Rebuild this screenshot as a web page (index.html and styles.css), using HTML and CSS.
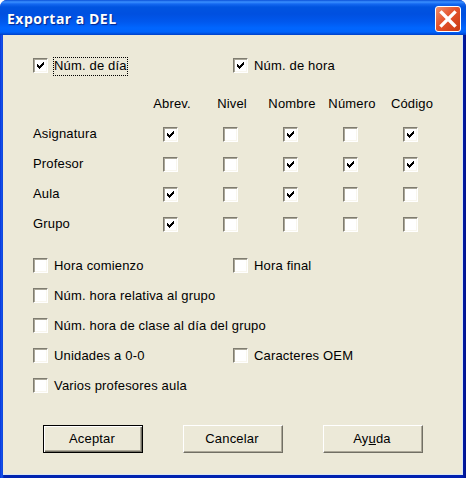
FILE: index.html
```
<!DOCTYPE html>
<html lang="es">
<head>
<meta charset="utf-8">
<title>Exportar a DEL</title>
<link rel="stylesheet" href="styles.css">
</head>
<body>
<svg class="defs" aria-hidden="true"><symbol id="tick" viewBox="0 0 7 7"><path d="M0 2h1v1h1v1h1V3h1V2h1V1h1V0h1v3H6v1H5v1H4v1H3v1H2V6H1V5H0z"/></symbol></svg>
<main class="window">
  <header class="titlebar">
    <h1 class="title">Exportar a DEL</h1>
    <button class="close" aria-label="Cerrar"><svg viewBox="0 0 26 26"><path d="M6 6L20 20M20 6L6 20"/></svg></button>
  </header>
  <div class="content">
    <div class="row">
      <label class="option"><span class="box"><svg><use href="#tick"/></svg></span><span class="text focus">Núm. de día</span></label>
      <label class="option"><span class="box"><svg><use href="#tick"/></svg></span><span class="text">Núm. de hora</span></label>
    </div>
    <div class="grid">
      <span></span><span class="head">Abrev.</span><span class="head">Nivel</span><span class="head">Nombre</span><span class="head">Número</span><span class="head">Código</span>
      <span class="name">Asignatura</span><span class="box"><svg><use href="#tick"/></svg></span><span class="box"></span><span class="box"><svg><use href="#tick"/></svg></span><span class="box"></span><span class="box"><svg><use href="#tick"/></svg></span>
      <span class="name">Profesor</span><span class="box"></span><span class="box"></span><span class="box"><svg><use href="#tick"/></svg></span><span class="box"><svg><use href="#tick"/></svg></span><span class="box"><svg><use href="#tick"/></svg></span>
      <span class="name">Aula</span><span class="box"><svg><use href="#tick"/></svg></span><span class="box"></span><span class="box"><svg><use href="#tick"/></svg></span><span class="box"></span><span class="box"></span>
      <span class="name">Grupo</span><span class="box"><svg><use href="#tick"/></svg></span><span class="box"></span><span class="box"></span><span class="box"></span><span class="box"></span>
    </div>
    <div class="row">
      <label class="option"><span class="box"></span><span class="text">Hora comienzo</span></label>
      <label class="option"><span class="box"></span><span class="text">Hora final</span></label>
    </div>
    <div class="row"><label class="option"><span class="box"></span><span class="text">Núm. hora relativa al grupo</span></label></div>
    <div class="row"><label class="option"><span class="box"></span><span class="text">Núm. hora de clase al día del grupo</span></label></div>
    <div class="row">
      <label class="option"><span class="box"></span><span class="text">Unidades a 0-0</span></label>
      <label class="option"><span class="box"></span><span class="text">Caracteres OEM</span></label>
    </div>
    <div class="row"><label class="option"><span class="box"></span><span class="text">Varios profesores aula</span></label></div>
    <div class="actions">
      <button class="btn default">Aceptar</button>
      <button class="btn">Cancelar</button>
      <button class="btn">Ay<u>u</u>da</button>
    </div>
  </div>
</main>
</body>
</html>
```
FILE: styles.css
```
* { box-sizing: border-box; }
body {
  margin: 0;
  background: #fff;
  color: #000;
  font: 13px/16px "Liberation Sans", Arial, sans-serif;
  letter-spacing: 0.17px;
}
.defs { display: none; }
.window {
  width: 466px;
  height: 478px;
  overflow: hidden;
  border-radius: 7px 7px 0 0;
  background: linear-gradient(90deg, #0a35d8, #1556ee 2px, #0b3cd0 3px, #0024b0 4px, #0020b0 462px, #00128c);
}
.titlebar {
  display: flex;
  align-items: center;
  justify-content: space-between;
  height: 35px;
  padding: 3px 5px 0 7px;
  background: linear-gradient(180deg, #0a50d8 0, #3a90ff 2px, #1468f0 4px, #0054e0 7px, #0050e0 14px, #0058ee 22px, #0066ff 28px, #0064fc 32px, #0040c8 35px);
}
.title {
  margin: 0;
  color: #fff;
  font: bold 14px/18px "Open Sans", "Noto Sans", sans-serif;
  letter-spacing: 0.5px;
  text-shadow: 1px 1px 1px #06248a;
}
.close {
  width: 26px;
  height: 26px;
  padding: 0;
  border: 1px solid #fff;
  border-radius: 3px;
  background: linear-gradient(135deg, #f0906c, #e4532c 45%, #c93a12);
}
.close svg { display: block; width: 24px; height: 24px; }
.close path { stroke: #fff; stroke-width: 3.6; stroke-linecap: square; }
.content {
  height: 440px;
  margin: 0 3px;
  padding: 15px 0 0 30px;
  background: #ece9d8;
  border: solid #d8e6f4;
  border-width: 0 1px 1px 0;
}
.row { display: flex; height: 30px; }
.option { display: flex; align-items: center; width: 200px; white-space: nowrap; }
.box {
  flex: none;
  display: flex;
  align-items: center;
  justify-content: center;
  width: 15px;
  height: 15px;
  margin-top: 1px;
  background: #fff;
  border: 1px solid;
  border-color: #7f7c70 #fff #fff #7f7c70;
  box-shadow: inset 1px 1px #aaa798, inset -1px -1px #f8f6ee;
}
.box svg { width: 7px; height: 7px; }
.text { margin: 2px 0 0 5px; padding: 0 1px; }
.focus { padding: 1px 1px 2px; margin-top: 3px; outline: 1px dotted #000; outline-offset: -1px; }
.grid {
  display: grid;
  grid-template-columns: 130px repeat(5, 60px);
  grid-template-rows: 31px repeat(4, 30px);
  align-items: center;
  margin: 8px 0 11px;
}
.head { width: 60px; margin-left: -21px; text-align: center; }
.actions { display: flex; gap: 40px; margin: 25px 0 0 10px; }
.btn {
  width: 100px;
  height: 28px;
  padding: 0 2px 1px 0;
  border: 1px solid;
  border-color: #fff #716f64 #716f64 #fff;
  background: #ece9d8;
  box-shadow: inset -1px -1px #aca899;
  color: #000;
  font: inherit;
  letter-spacing: inherit;
}
.default { border-color: #000; box-shadow: inset 1px 1px #fff, inset -1px -1px #716f64, inset -2px -2px #aca899; }
```
